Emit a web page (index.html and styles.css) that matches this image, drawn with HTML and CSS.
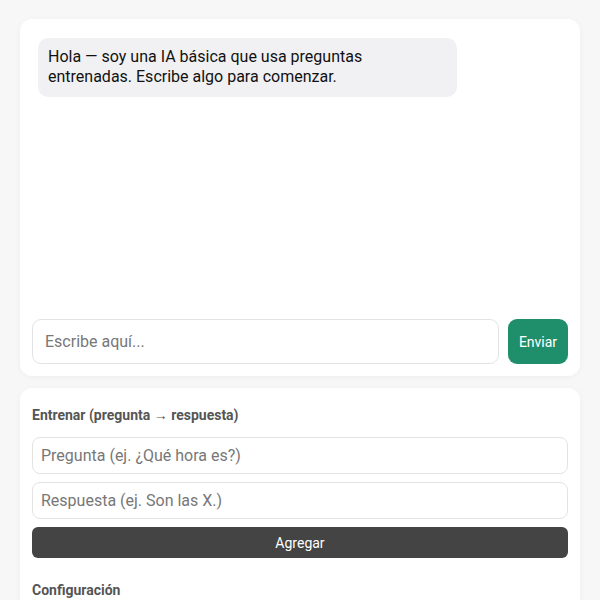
FILE: index.html
```html
<!DOCTYPE html>
<html lang="es">
<head>
<meta charset="utf-8">
<link rel="stylesheet" href="styles.css">
</head>
<body>
<div class="app">
  <section class="card chat">
    <div class="messages">
      <div class="bubble bot">Hola — soy una IA básica que usa preguntas entrenadas. Escribe algo para comenzar.</div>
    </div>
    <div class="composer">
      <input class="chat-input" type="text" placeholder="Escribe aquí...">
      <button class="send">Enviar</button>
    </div>
  </section>
  <section class="card train">
    <h3 class="section-title">Entrenar (pregunta → respuesta)</h3>
    <input class="field" type="text" placeholder="Pregunta (ej. ¿Qué hora es?)">
    <input class="field" type="text" placeholder="Respuesta (ej. Son las X.)">
    <button class="add">Agregar</button>
    <h3 class="section-title config">Configuración</h3>
  </section>
</div>
</body>
</html>
```
FILE: styles.css
```css
html, body {
  margin: 0;
  padding: 0;
  background: #f7f7f7;
  font-family: Roboto, "Liberation Sans", Arial, sans-serif;
  color: #111;
}
.app {
  padding: 19px 20px 0;
  display: flex;
  flex-direction: column;
  gap: 12px;
}
.card {
  background: #fff;
  border-radius: 12px;
  padding: 12px;
  box-shadow: 0 1px 6px rgba(0,0,0,0.04);
}
.chat {
  display: flex;
  flex-direction: column;
  gap: 12px;
}
.messages {
  height: 263px;
  padding: 7px 6px 6px;
  display: flex;
  flex-direction: column;
  align-items: flex-start;
}
.bubble {
  max-width: 80%;
  box-sizing: border-box;
  width: 80%;
  background: #f1f1f3;
  border-radius: 10px;
  padding: 9px 10px 10px;
  font-size: 16px;
  line-height: 20px;
  color: #111;
}
.composer {
  display: flex;
  gap: 9px;
}
.chat-input {
  flex: 1;
  height: 45px;
  box-sizing: border-box;
  border: 1px solid #e3e3e3;
  border-radius: 9px;
  padding: 0 12px;
  font-family: inherit;
  font-size: 16px;
  color: #111;
  outline: none;
}
.chat-input::placeholder, .field::placeholder {
  color: #777;
}
.send {
  width: 60px;
  height: 45px;
  border: none;
  border-radius: 9px;
  background: #1f8f6b;
  color: #fff;
  font-family: inherit;
  font-size: 14px;
  padding: 0;
}
.train {
  display: flex;
  flex-direction: column;
  padding-bottom: 20px;
}
.section-title {
  margin: 7px 0 13px;
  font-size: 14px;
  line-height: 17px;
  font-weight: 700;
  color: #555;
}
.section-title.config {
  margin-top: 24px;
}
.field {
  height: 37px;
  box-sizing: border-box;
  border: 1px solid #e3e3e3;
  border-radius: 8px;
  padding: 0 8px;
  font-family: inherit;
  font-size: 16px;
  margin-bottom: 8px;
  outline: none;
}
.add {
  height: 31px;
  border: none;
  border-radius: 6px;
  background: #444;
  color: #fff;
  font-family: inherit;
  font-size: 14px;
  padding: 0;
}
```
